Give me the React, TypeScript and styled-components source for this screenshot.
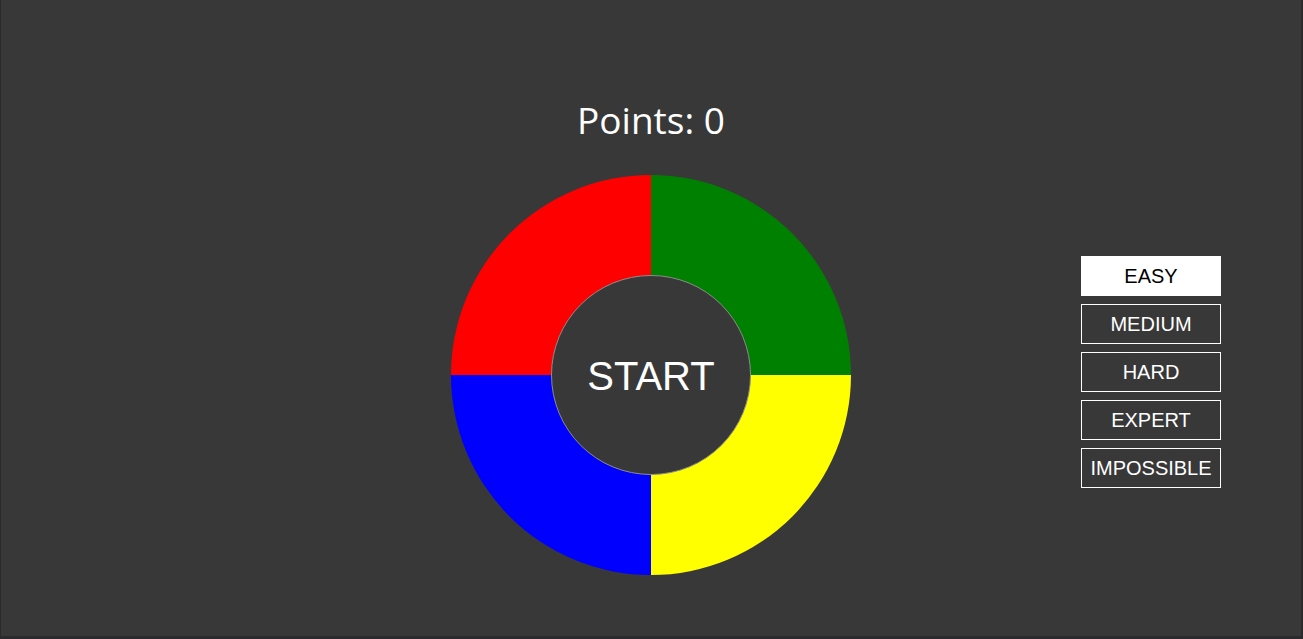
import React from "react";
import styled, { createGlobalStyle } from "styled-components";

const Global = createGlobalStyle`
  html, body { margin: 0; padding: 0; background: #2b2b2d; }
  body { font-family: "Liberation Sans", Arial, sans-serif; }
`;

const Frame = styled.div`
  width: 1300px;
  height: 636px;
  margin-left: 1px;
  background: #383838;
  display: grid;
  grid-template-columns: 1fr auto 1fr;
  align-items: start;
  box-sizing: border-box;
`;

const Center = styled.div`
  grid-column: 2;
  display: flex;
  flex-direction: column;
  align-items: center;
  padding-top: 98px;
`;

const Points = styled.div`
  font-family: "Open Sans", "Noto Sans", sans-serif;
  font-size: 37px;
  line-height: 44px;
  color: #ffffff;
  margin-bottom: 33px;
`;

const Board = styled.div`
  position: relative;
  width: 400px;
  height: 400px;
  display: grid;
  grid-template-columns: 200px 200px;
  grid-template-rows: 200px 200px;
`;

const Quad = styled.div<{ $color: string; $corner: string }>`
  background: ${(p) => p.$color};
  ${(p) => `border-${p.$corner}-radius: 200px;`}
  cursor: pointer;
`;

const StartButton = styled.div`
  position: absolute;
  left: 100px;
  top: 100px;
  width: 200px;
  height: 200px;
  box-sizing: border-box;
  border-radius: 50%;
  border: 1px solid #8c8c8c;
  background: #383838;
  display: flex;
  align-items: center;
  justify-content: center;
  color: #ffffff;
  font-family: "Liberation Sans", Arial, sans-serif;
  font-size: 40px;
  padding-top: 2px;
  cursor: pointer;
`;

const Side = styled.div`
  grid-column: 3;
  display: flex;
  flex-direction: column;
  align-items: flex-end;
  gap: 8px;
  padding-top: 256px;
  padding-right: 80px;
`;

const Level = styled.button<{ $active?: boolean }>`
  width: 140px;
  height: 40px;
  box-sizing: border-box;
  border: 1px solid #ffffff;
  background: ${(p) => (p.$active ? "#ffffff" : "transparent")};
  color: ${(p) => (p.$active ? "#000000" : "#ffffff")};
  font-family: "Liberation Sans", Arial, sans-serif;
  font-size: 20px;
  padding: 0;
  cursor: pointer;
`;

const levels = ["EASY", "MEDIUM", "HARD", "EXPERT", "IMPOSSIBLE"];

export default function App() {
  return (
    <>
      <Global />
      <Frame>
        <Center>
          <Points>Points: 0</Points>
          <Board>
            <Quad $color="#ff0000" $corner="top-left" />
            <Quad $color="#008000" $corner="top-right" />
            <Quad $color="#0000ff" $corner="bottom-left" />
            <Quad $color="#ffff00" $corner="bottom-right" />
            <StartButton>START</StartButton>
          </Board>
        </Center>
        <Side>
          {levels.map((l, i) => (
            <Level key={l} $active={i === 0}>
              {l}
            </Level>
          ))}
        </Side>
      </Frame>
    </>
  );
}
